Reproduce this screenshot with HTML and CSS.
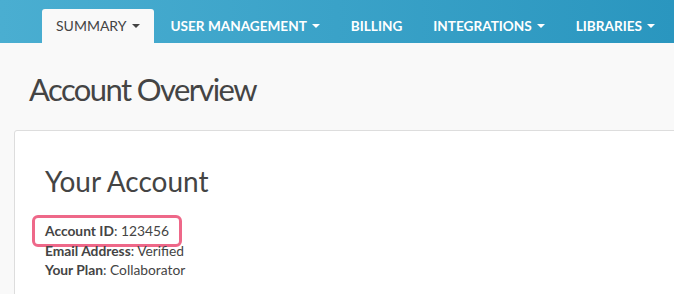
FILE: index.html
```html
<!DOCTYPE html>
<html lang="en">
  <head>
    <meta charset="UTF-8" />
    <meta name="viewport" content="width=device-width, initial-scale=1.0" />
    <title>Account Overview</title>
    <link rel="stylesheet" href="styles.css">
  </head>
  <body>
    <nav class="topnav">
      <a class="tab active" href="#">Summary<span class="caret"></span></a>
      <a class="tab" href="#">User Management<span class="caret"></span></a>
      <a class="tab" href="#">Billing</a>
      <a class="tab" href="#">Integrations<span class="caret"></span></a>
      <a class="tab" href="#">Libraries<span class="caret"></span></a>
    </nav>

    <main class="page">
      <h1 class="page-title">Account Overview</h1>

      <div class="panel">
        <h2>Your Account</h2>
        <ul class="details">
          <li><span class="highlight"><strong>Account ID</strong>: 123456</span></li>
          <li><strong>Email Address</strong>: Verified</li>
          <li><strong>Your Plan</strong>: Collaborator</li>
        </ul>
      </div>
    </main>
  </body>
</html>
```

FILE: styles.css
```css
html,
body {
  margin: 0;
  padding: 0;
  background-color: #f9f9f9;
  font-family: Lato, "Open Sans", sans-serif;
  color: #444;
  overflow: hidden;
}
.topnav {
  display: flex;
  align-items: flex-end;
  height: 43px;
  padding-left: 42px;
  background: linear-gradient(to right, #4aaed1, #2a96bf);
  white-space: nowrap;
}
.tab {
  display: flex;
  align-items: center;
  height: 33px;
  padding: 0 14px 1px 14px;
  margin-right: 3px;
  color: #fff;
  font-size: 13.6px;
  font-weight: 700;
  text-transform: uppercase;
  text-decoration: none;
  border-radius: 3px 3px 0 0;
}
.tab.active {
  background-color: #f9f9f9;
  color: #444;
  font-size: 14px;
  font-weight: 400;
}
.caret {
  display: inline-block;
  width: 0;
  height: 0;
  margin-left: 5px;
  margin-top: 1px;
  border-top: 4px solid currentColor;
  border-left: 4px solid transparent;
  border-right: 4px solid transparent;
}
.page {
  padding: 0 0 0 14px;
}
.page-title {
  margin: 0;
  padding: 29px 0 24px 15px;
  font-size: 31px;
  font-weight: 400;
  line-height: 34px;
  letter-spacing: -1.6px;
}
.panel {
  margin-right: -20px;
  padding: 33px 30px 20px 30px;
  background-color: #fff;
  border: 1px solid #ddd;
  border-radius: 3px;
}
.panel h2 {
  margin: 0 0 23px 0;
  font-size: 28px;
  font-weight: 400;
  line-height: 34px;
}
.details {
  list-style: none;
  margin: 0;
  padding: 0;
  font-size: 13.8px;
  line-height: 19.5px;
}
.details strong {
  font-weight: 700;
}
.highlight {
  display: inline-block;
  margin: -6px 0 -6px -13px;
  padding: 3px 10px 3px 10px;
  border: 3px solid #ee6889;
  border-radius: 6px;
}
```
